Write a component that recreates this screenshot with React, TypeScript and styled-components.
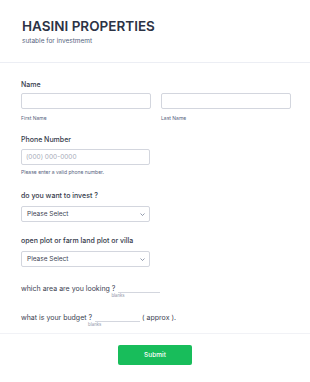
import React from 'react';
import styled, { createGlobalStyle } from 'styled-components';

const GlobalStyle = createGlobalStyle`
  html, body {
    margin: 0;
    padding: 0;
    background: #ffffff;
    font-family: Inter, "Noto Sans", sans-serif;
  }
`;

const Page = styled.div`
  width: 310px;
  height: 382px;
  background: #fff;
  display: flex;
  flex-direction: column;
`;

const Header = styled.div`
  padding: 18px 22px 0;
  height: 63px;
  box-sizing: border-box;
  border-bottom: 1px solid #eceef4;
`;

const Title = styled.h1`
  margin: 0;
  font-size: 13.5px;
  line-height: 16px;
  font-weight: 600;
  color: #2c3345;
`;

const Subtitle = styled.div`
  margin-top: 3px;
  font-size: 6.5px;
  line-height: 8px;
  color: #57647e;
`;

const Body = styled.div`
  padding: 17px 21px 0;
  height: 271px;
  box-sizing: border-box;
  border-bottom: 1px solid #f1f2f6;
  display: flex;
  flex-direction: column;
`;

const Field = styled.div<{ gap?: number }>`
  margin-bottom: ${p => p.gap ?? 0}px;
`;

const Label = styled.div<{ mb?: number }>`
  font-size: 7px;
  line-height: 9px;
  font-weight: 500;
  color: #343a4a;
  margin-bottom: ${p => p.mb ?? 5}px;
`;

const Row = styled.div`
  display: flex;
  gap: 10px;
`;

const Col = styled.div`
  width: 130px;
`;

const Input = styled.div<{ w?: number }>`
  width: ${p => p.w ?? 130}px;
  height: 16px;
  box-sizing: border-box;
  border: 1px solid #d3d6de;
  border-radius: 2px;
  background: #fff;
  display: flex;
  align-items: center;
  padding: 0 4px;
  font-size: 6.5px;
  color: #a7abb8;
`;

const Select = styled(Input)`
  justify-content: space-between;
  color: #3b4150;
  padding: 0 4px 0 5px;
`;

const Hint = styled.div<{ mt?: number }>`
  margin-top: ${p => p.mt ?? 4}px;
  font-size: 5px;
  line-height: 6px;
  color: #57647e;
`;

const Sentence = styled.div`
  font-size: 7px;
  line-height: 9px;
  color: #3b4150;
  display: flex;
  align-items: flex-start;
`;

const Blank = styled.span<{ w: number }>`
  display: inline-flex;
  flex-direction: column;
  align-items: flex-start;
  width: ${p => p.w}px;
  margin: 0 2px 0 3px;
`;

const BlankLine = styled.span`
  display: block;
  height: 8px;
  width: 100%;
  border-bottom: 1px solid #d3d6de;
`;

const BlankHint = styled.span`
  font-size: 4.3px;
  line-height: 5px;
  color: #8d93a6;
  margin-left: -7px;
`;

const Footer = styled.div`
  flex: 1;
  display: flex;
  justify-content: center;
  padding-top: 11px;
`;

const Submit = styled.button`
  width: 74px;
  height: 20px;
  border: none;
  border-radius: 2px;
  background: #18bd5b;
  color: #fff;
  font-family: Inter, "Noto Sans", sans-serif;
  font-size: 6.5px;
  font-weight: 500;
`;

const Chevron = () => (
  <svg width="5" height="3" viewBox="0 0 10 6">
    <path d="M1 1l4 4 4-4" fill="none" stroke="#57647e" strokeWidth="1.3" />
  </svg>
);

export default function App() {
  return (
    <Page>
      <GlobalStyle />
      <Header>
        <Title>HASINI PROPERTIES</Title>
        <Subtitle>sutable for investmemt</Subtitle>
      </Header>
      <Body>
        <Field gap={14}>
          <Label mb={4}>Name</Label>
          <Row>
            <Col>
              <Input />
              <Hint mt={6}>First Name</Hint>
            </Col>
            <Col>
              <Input />
              <Hint mt={6}>Last Name</Hint>
            </Col>
          </Row>
        </Field>
        <Field gap={16}>
          <Label>Phone Number</Label>
          <Input w={129}>(000) 000-0000</Input>
          <Hint>Please enter a valid phone number.</Hint>
        </Field>
        <Field gap={14}>
          <Label mb={6}>do you want to invest ?</Label>
          <Select w={129}>
            Please Select
            <Chevron />
          </Select>
        </Field>
        <Field gap={17}>
          <Label mb={6}>open plot or farm land plot or villa</Label>
          <Select w={129}>
            Please Select
            <Chevron />
          </Select>
        </Field>
        <Field gap={15}>
          <Sentence>
            which area are you looking ?
            <Blank w={42}>
              <BlankLine />
              <BlankHint>blanks</BlankHint>
            </Blank>
          </Sentence>
        </Field>
        <Field>
          <Sentence>
            what is your budget ?
            <Blank w={45}>
              <BlankLine />
              <BlankHint>blanks</BlankHint>
            </Blank>
            ( approx ).
          </Sentence>
        </Field>
      </Body>
      <Footer>
        <Submit>Submit</Submit>
      </Footer>
    </Page>
  );
}
